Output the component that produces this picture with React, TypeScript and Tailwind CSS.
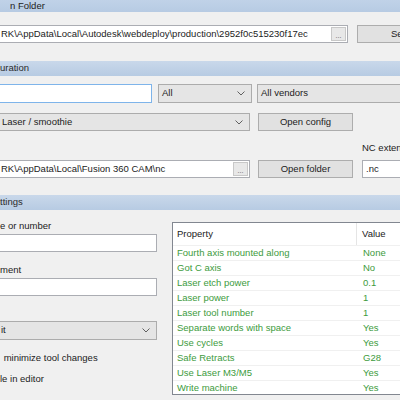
import React from "react";

const hdr = "h-[15px] flex items-center bg-gradient-to-b from-[#c9d8ea] to-[#b7cbe3] text-[#2a2a2a]";
const input = "shrink-0 bg-white border border-[#abadb3] flex items-center px-[3px] whitespace-nowrap overflow-hidden";
const btn = "shrink-0 bg-[#e1e1e1] border border-[#adadad] flex items-center justify-center whitespace-nowrap";
const sel = "shrink-0 bg-[#e5e5e5] border border-[#acacac] flex items-center justify-between px-[3px] whitespace-nowrap overflow-hidden";

function Chevron() {
  return (
    <svg width="8" height="5" viewBox="0 0 8 5" className="shrink-0 mr-[3px]">
      <path d="M0.5 0.5 L4 4 L7.5 0.5" fill="none" stroke="#606060" strokeWidth="1" />
    </svg>
  );
}

function Dots() {
  return (
    <div className="w-[15px] h-[14px] bg-[#e8e8e8] border border-[#c8c8c8] flex items-end justify-center text-[7px] leading-[8px] text-[#555] shrink-0">...</div>
  );
}

const rows: [string, string][] = [
  ["Fourth axis mounted along", "None"],
  ["Got C axis", "No"],
  ["Laser etch power", "0.1"],
  ["Laser power", "1"],
  ["Laser tool number", "1"],
  ["Separate words with space", "Yes"],
  ["Use cycles", "Yes"],
  ["Safe Retracts", "G28"],
  ["Use Laser M3/M5", "Yes"],
  ["Write machine", "Yes"],
];

export default function App() {
  return (
    <div
      className="w-[400px] h-[400px] overflow-hidden bg-[#f0f0f0] text-[9.5px] text-[#222] relative"
      style={{ fontFamily: '"Liberation Sans", Arial, sans-serif' }}
    >
      <div className={"h-[12px] flex items-center bg-gradient-to-b from-[#c0d2e8] to-[#b7cbe3] pl-[10px]"}>n Folder</div>

      <div className="mt-[13px] h-[18px] flex">
        <div className={input + " w-[358px] -ml-[10px] pr-[1px] justify-between"}>
          <span className="pl-[7px]">RK\AppData\Local\Autodesk\webdeploy\production\2952f0c515230f17ec</span>
          <Dots />
        </div>
        <div className={btn + " ml-[9px] w-[80px] justify-start pl-[33px] overflow-hidden"}>Select</div>
      </div>

      <div className={hdr + " mt-[18px]"}>uration</div>

      <div className="mt-[8px] h-[19px] flex">
        <div className="shrink-0 w-[162px] -ml-[10px] bg-white border border-[#7eb4ea]" />
        <div className={sel + " ml-[6px] w-[94px]"}>
          <span>All</span>
          <Chevron />
        </div>
        <div className={sel + " ml-[5px] w-[160px]"}>
          <span>All vendors</span>
          <Chevron />
        </div>
      </div>

      <div className="mt-[10px] h-[18px] flex">
        <div className={sel + " w-[260px] -ml-[10px] pl-[11px]"}>
          <span>Laser / smoothie</span>
          <Chevron />
        </div>
        <div className={btn + " ml-[8px] w-[95px]"}>Open config</div>
      </div>

      <div className="mt-[12px] h-[11px] flex items-center pl-[362px] whitespace-nowrap overflow-hidden">NC extension</div>

      <div className="mt-[6px] h-[18px] flex">
        <div className={input + " w-[260px] -ml-[10px] pr-[1px] justify-between"}>
          <span className="pl-[7px]">RK\AppData\Local\Fusion 360 CAM\nc</span>
          <Dots />
        </div>
        <div className={btn + " ml-[8px] w-[95px]"}>Open folder</div>
        <div className={input + " ml-[9px] w-[60px]"}>.nc</div>
      </div>

      <div className={hdr + " mt-[17px]"}>ttings</div>

      <div className="flex mt-[12px]">
        <div className="w-[157px] flex flex-col shrink-0">
          <div className="h-[10px] flex items-center mt-[-1px] whitespace-nowrap">e or number</div>
          <div className={input + " mt-[3px] h-[18px] -ml-[10px] w-[167px]"} />
          <div className="h-[10px] flex items-center mt-[13px]">ment</div>
          <div className={input + " mt-[3px] h-[18px] -ml-[10px] w-[167px]"} />
          <div className={sel + " mt-[25px] h-[19px] -ml-[10px] w-[167px] pl-[10px]"}>
            <span>it</span>
            <Chevron />
          </div>
          <div className="mt-[13px] h-[10px] flex items-center pl-[1px] whitespace-nowrap">&nbsp;minimize tool changes</div>
          <div className="mt-[11px] h-[10px] flex items-center whitespace-nowrap">le in editor</div>
        </div>

        <div className="shrink-0 ml-[15px] w-[240px] h-[173px] bg-white border border-[#828790] flex flex-col">
          <div className="h-[22px] flex items-center shrink-0">
            <div className="w-[184px] pl-[4px] h-full flex items-center border-r border-[#e5e5e5]">Property</div>
            <div className="pl-[5px]">Value</div>
          </div>
          {rows.map(([p, v]) => (
            <div key={p} className="h-[15px] flex items-center border-t border-[#f0f0f0] text-[#3d9b3d] shrink-0">
              <div className="w-[184px] pl-[4px] whitespace-nowrap">{p}</div>
              <div className="pl-[6px]">{v}</div>
            </div>
          ))}
        </div>
      </div>
    </div>
  );
}
